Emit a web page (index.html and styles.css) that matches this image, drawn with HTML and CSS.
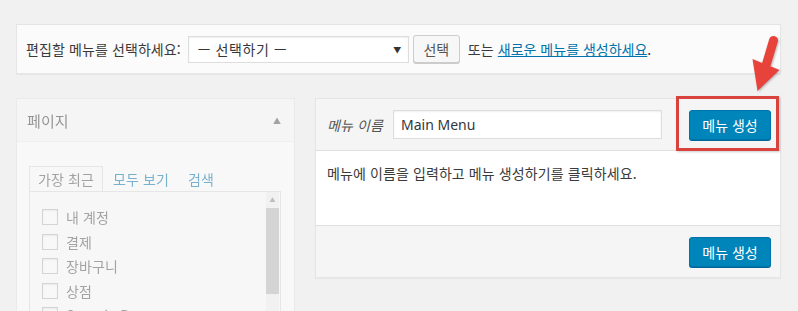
FILE: index.html
```html
<!DOCTYPE html>
<html lang="ko">
<head>
    <meta charset="UTF-8">
    <meta name="viewport" content="width=device-width, initial-scale=1.0">
    <title>메뉴</title>
    <link rel="stylesheet" href="styles.css">
</head>
<body>
    <div class="manage-menus">
        <span class="select-label">편집할 메뉴를 선택하세요:</span>
        <div class="fake-select">
            <span>— 선택하기 —</span>
            <span class="select-arrow">▼</span>
        </div>
        <button class="button">선택</button>
        <span class="or-text">또는 <a href="#">새로운 메뉴를 생성하세요</a>.</span>
    </div>

    <div class="columns">
        <div class="postbox">
            <h3 class="postbox-title">
                <span>페이지</span>
                <span class="toggle">▲</span>
            </h3>
            <div class="postbox-inside">
                <ul class="tabs">
                    <li class="tab active">가장 최근</li>
                    <li class="tab"><a href="#">모두 보기</a></li>
                    <li class="tab"><a href="#">검색</a></li>
                </ul>
                <div class="tab-panel">
                    <ul class="checklist">
                        <li><span class="check"></span>내 계정</li>
                        <li><span class="check"></span>결제</li>
                        <li><span class="check"></span>장바구니</li>
                        <li><span class="check"></span>상점</li>
                        <li><span class="check"></span>Sample Page</li>
                    </ul>
                    <div class="scrollbar">
                        <span class="scroll-up">▲</span>
                        <div class="scroll-thumb"></div>
                    </div>
                </div>
            </div>
        </div>

        <div class="menu-edit">
            <div class="menu-header">
                <label class="menu-name-label">메뉴 이름</label>
                <input type="text" class="menu-name" value="Main Menu">
                <button class="button-primary">메뉴 생성</button>
            </div>
            <div class="menu-body">
                <p>메뉴에 이름을 입력하고 메뉴 생성하기를 클릭하세요.</p>
            </div>
            <div class="menu-footer">
                <button class="button-primary">메뉴 생성</button>
            </div>

            <!-- 강조 표시 -->
            <div class="highlight-box"></div>
            <svg class="arrow" width="40" height="64" viewBox="0 0 40 64">
                <line x1="29.5" y1="8.5" x2="22.5" y2="32" stroke="#e8433b" stroke-width="9" stroke-linecap="round"/>
                <polygon points="8.5,27 35.5,38 13.5,59" fill="#e8433b"/>
            </svg>
        </div>
    </div>
</body>
</html>
```

FILE: styles.css
```css
* {
    margin: 0;
    padding: 0;
    box-sizing: border-box;
}

html {
    overflow: hidden;
}

body {
    background-color: #f1f1f1;
    font-family: "Noto Sans CJK KR", "Noto Sans", sans-serif;
    font-size: 14px;
    letter-spacing: 0.1px;
    color: #3a3a3a;
    padding: 24px 17px 0 16px;
}

a {
    color: #0073aa;
}

.manage-menus {
    display: flex;
    align-items: center;
    height: 50px;
    padding: 0 9px;
    background-color: #fbfbfb;
    border: 1px solid #e5e5e5;
    box-shadow: 0 1px 1px rgba(0, 0, 0, 0.04);
}

.select-label {
    margin-right: 7px;
}

.fake-select {
    display: flex;
    align-items: center;
    justify-content: space-between;
    width: 221px;
    height: 27px;
    padding: 0 6px 0 9px;
    background-color: #fff;
    border: 1px solid #ddd;
    box-shadow: inset 0 1px 2px rgba(0, 0, 0, 0.07);
    color: #32373c;
    letter-spacing: 0.6px;
}

.select-arrow {
    font-size: 8px;
    color: #333;
}

.button {
    margin-left: 4px;
    width: 47px;
    height: 28px;
    font-family: inherit;
    font-size: 14px;
    color: #555;
    background-color: #f7f7f7;
    border: 1px solid #ccc;
    border-radius: 3px;
    box-shadow: 0 1px 0 #ccc;
}

.or-text {
    margin-left: 8px;
}

.or-text a {
    letter-spacing: 0;
}

.columns {
    display: flex;
    gap: 20px;
    margin-top: 24px;
    align-items: flex-start;
}

/* 왼쪽 상자 - 비활성 상태 */
.postbox {
    width: 279px;
    flex-shrink: 0;
    background-color: #fff;
    border: 1px solid #e5e5e5;
    opacity: 0.5;
}

.postbox-title {
    display: flex;
    justify-content: space-between;
    align-items: center;
    height: 43px;
    padding: 0 13px 0 10px;
    font-size: 15px;
    font-weight: normal;
    border-bottom: 1px solid #eee;
    background-color: #fafafa;
}

.toggle {
    font-size: 8px;
    color: #555;
}

.postbox-inside {
    padding: 24px 13px 0 12px;
    height: 200px;
}

.tabs {
    display: flex;
    list-style: none;
    gap: 1px;
}

.tab {
    height: 25px;
    line-height: 24px;
    padding: 0 8px;
    border: 1px solid transparent;
    border-bottom: none;
}

.tab a {
    text-decoration: none;
}

.tab.active {
    color: #555;
    background-color: #fdfdfd;
    border-color: #ddd;
    margin-bottom: -1px;
    position: relative;
}

.tab-panel {
    display: flex;
    height: 140px;
    background-color: #fdfdfd;
    border: 1px solid #ddd;
}

.checklist {
    flex: 1;
    list-style: none;
    padding: 13px 0 0 12px;
    color: #555;
}

.checklist li {
    display: flex;
    align-items: center;
    height: 24.5px;
}

.check {
    width: 16px;
    height: 16px;
    margin-right: 8px;
    background-color: #fff;
    border: 1px solid #b4b9be;
    box-shadow: inset 0 1px 2px rgba(0, 0, 0, 0.1);
}

.scrollbar {
    width: 13px;
    margin-right: 1px;
    display: flex;
    flex-direction: column;
    align-items: center;
    background-color: #f1f1f1;
}

.scroll-up {
    font-size: 6px;
    color: #888;
    height: 16px;
    line-height: 16px;
}

.scroll-thumb {
    width: 100%;
    height: 86px;
    background-color: #b8b8b8;
}

/* 오른쪽 메뉴 편집 영역 */
.menu-edit {
    flex: 1;
    position: relative;
    background-color: #fff;
    border: 1px solid #e5e5e5;
    box-shadow: 0 1px 1px rgba(0, 0, 0, 0.04);
}

.menu-header {
    display: flex;
    align-items: center;
    height: 52px;
    padding: 0 9px 0 11px;
    background-color: #f5f5f5;
    border-bottom: 1px solid #dfdfdf;
}

.menu-name-label {
    width: 66px;
    font-style: italic;
    color: #555;
}

.menu-name {
    width: 269px;
    height: 29px;
    padding: 0 7px;
    font-family: "Noto Sans", "Noto Sans CJK KR", sans-serif;
    font-size: 14px;
    color: #32373c;
    border: 1px solid #ddd;
    box-shadow: inset 0 1px 2px rgba(0, 0, 0, 0.07);
    outline: none;
}

.button-primary {
    margin-left: auto;
    width: 82px;
    height: 30px;
    font-family: inherit;
    font-size: 14px;
    color: #fff;
    background-color: #0085ba;
    border: 1px solid #0073aa;
    border-radius: 3px;
    box-shadow: 0 1px 0 #006799;
}

.menu-body {
    height: 74px;
    padding: 12px 11px 0;
}

.menu-body p {
    line-height: 20px;
}

.menu-footer {
    display: flex;
    align-items: center;
    height: 52px;
    padding: 0 9px;
    background-color: #f5f5f5;
    border-top: 1px solid #dfdfdf;
}

.highlight-box {
    position: absolute;
    left: 360px;
    top: -3px;
    width: 103px;
    height: 55px;
    border: 3px solid #d9433e;
    box-shadow: 1px 1px 2px rgba(0, 0, 0, 0.2);
}

.arrow {
    position: absolute;
    left: 428px;
    top: -67px;
    filter: drop-shadow(1px 1px 1px rgba(0, 0, 0, 0.25));
}
```
